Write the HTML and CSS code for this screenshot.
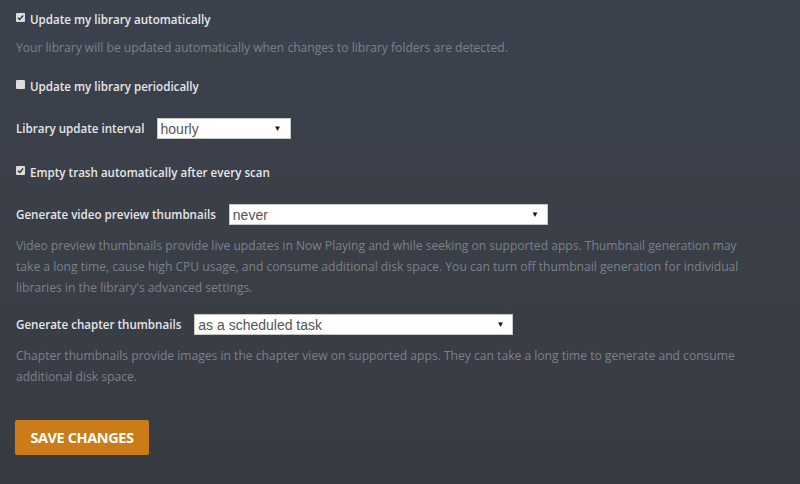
FILE: index.html
```html
<!DOCTYPE html>
<html lang="en">
<head>
<meta charset="utf-8">
<title>Library settings</title>
<link rel="stylesheet" href="styles.css">
</head>
<body>
<form class="settings">
  <div class="group g-auto">
    <div class="check-row">
      <span class="cb checked"><svg viewBox="0 0 10 10" width="9" height="9"><path d="M2.2 5.2 L4.2 7.2 L7.9 2.8" fill="none" stroke="#2f343b" stroke-width="1.6"/></svg></span>
      <span class="label">Update my library automatically</span>
    </div>
    <p class="help">Your library will be updated automatically when changes to library folders are detected.</p>
  </div>

  <div class="group g-periodic">
    <div class="check-row">
      <span class="cb"></span>
      <span class="label">Update my library periodically</span>
    </div>
  </div>

  <div class="group g-interval">
    <div class="select-row">
      <span class="label">Library update interval</span>
      <div class="select w-small"><span class="value">hourly</span><span class="arrow">▼</span></div>
    </div>
  </div>

  <div class="group g-trash">
    <div class="check-row">
      <span class="cb checked"><svg viewBox="0 0 10 10" width="9" height="9"><path d="M2.2 5.2 L4.2 7.2 L7.9 2.8" fill="none" stroke="#2f343b" stroke-width="1.6"/></svg></span>
      <span class="label">Empty trash automatically after every scan</span>
    </div>
  </div>

  <div class="group g-video">
    <div class="select-row">
      <span class="label">Generate video preview thumbnails</span>
      <div class="select w-large"><span class="value">never</span><span class="arrow">▼</span></div>
    </div>
    <p class="help">Video preview thumbnails provide live updates in Now Playing and while seeking on supported apps. Thumbnail generation may take a long time, cause high CPU usage, and consume additional disk space. You can turn off thumbnail generation for individual libraries in the library's advanced settings.</p>
  </div>

  <div class="group g-chapter">
    <div class="select-row">
      <span class="label">Generate chapter thumbnails</span>
      <div class="select w-large"><span class="value">as a scheduled task</span><span class="arrow">▼</span></div>
    </div>
    <p class="help">Chapter thumbnails provide images in the chapter view on supported apps. They can take a long time to generate and consume additional disk space.</p>
  </div>

  <div class="actions">
    <button type="button" class="btn-save">SAVE CHANGES</button>
  </div>
</form>
</body>
</html>
```

FILE: styles.css
```css
html, body {
  margin: 0;
  padding: 0;
  height: 100%;
}

body {
  background: linear-gradient(180deg, #3b424d 0%, #3a3e47 55%, #393b42 100%);
  font-family: "Open Sans", "Liberation Sans", sans-serif;
  color: #e8e8e8;
  overflow: hidden;
}

.settings {
  display: flex;
  flex-direction: column;
  padding: 9px 16px 0 16px;
  width: 732px;
}

.group {
  display: flex;
  flex-direction: column;
}

.g-periodic { margin-top: 18px; }
.g-interval { margin-top: 22px; }
.g-trash { margin-top: 23px; }
.g-video { margin-top: 22px; }
.g-chapter { margin-top: 16px; }

.check-row {
  display: flex;
  align-items: center;
  height: 20px;
}

.cb {
  width: 9px;
  height: 9px;
  background: #dcdcdc;
  border-radius: 1px;
  margin-right: 5px;
  margin-top: -4px;
  display: flex;
  align-items: center;
  justify-content: center;
}

.cb svg { display: block; }

.label {
  font-size: 11.6px;
  font-weight: 600;
  color: #e6e6e6;
  white-space: nowrap;
}

.help {
  margin: 8px 0 0 0;
  font-size: 12.1px;
  line-height: 21px;
  color: #7c8189;
}

.g-video .help, .g-chapter .help { margin-top: 10px; }

.select-row {
  display: flex;
  align-items: center;
  height: 21px;
}

.select-row .label { margin-right: 12px; }

.g-video .select-row .label { margin-right: 13px; }
.g-chapter .select-row .label { margin-right: 13px; }

.select {
  display: flex;
  align-items: center;
  justify-content: space-between;
  height: 21px;
  box-sizing: border-box;
  background: #ffffff;
  border: 1px solid #c7c7c7;
  padding: 0 8px 0 3px;
  font-family: "Liberation Sans", Arial, sans-serif;
  font-size: 14px;
  color: #555;
}

.w-small { width: 134px; }
.w-large { width: 319px; }

.arrow {
  font-size: 8px;
  color: #111;
}

.actions {
  margin-top: 33px;
}

.btn-save {
  width: 134px;
  height: 35px;
  margin-left: -1px;
  background: #cc7b19;
  border: none;
  border-radius: 2px;
  color: #fff;
  font-family: "Open Sans", "Liberation Sans", sans-serif;
  font-weight: 700;
  font-size: 14.5px;
  letter-spacing: -0.4px;
  padding: 0;
  cursor: pointer;
}
```
